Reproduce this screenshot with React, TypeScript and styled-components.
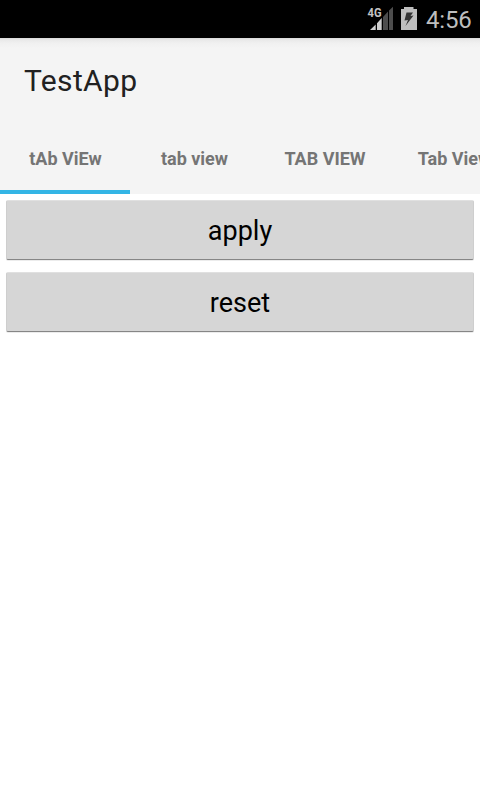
import React from 'react';
import styled, { createGlobalStyle } from 'styled-components';

const GlobalStyle = createGlobalStyle`
  * { box-sizing: border-box; }
  body { margin: 0; background: #fff; font-family: Roboto, sans-serif; overflow: hidden; }
`;

const Screen = styled.main`
  width: 480px;
  height: 800px;
  display: flex;
  flex-direction: column;
  overflow: hidden;
  background: #fff;
`;

const StatusBar = styled.header`
  height: 38px;
  flex: none;
  display: flex;
  align-items: center;
  justify-content: flex-end;
  padding-right: 8px;
  background: #000;
`;

const SignalIcon = styled.svg`
  flex: none;
  width: 28px;
  height: 38px;
  margin-right: 8px;
`;

const BatteryIcon = styled.svg`
  flex: none;
  width: 16px;
  height: 38px;
  margin-right: 9px;
`;

const Clock = styled.time`
  width: 46px;
  color: #bebebe;
  font-size: 24px;
  line-height: 38px;
  letter-spacing: -0.2px;
  padding-top: 1px;
`;

const AppBar = styled.div`
  height: 156px;
  flex: none;
  background: linear-gradient(#d9d9d9 0, #e9e9e9 2px, #f0f0f0 5px, #f4f4f4 10px);
`;

const Title = styled.h1`
  margin: 0;
  height: 84px;
  padding: 1px 0 0 24px;
  font-size: 30px;
  font-weight: 400;
  line-height: 84px;
  letter-spacing: 0.35px;
  color: #212121;
`;

const TabStrip = styled.nav`
  height: 72px;
  display: flex;
  overflow: hidden;
`;

const Tab = styled.button<{ $width: number }>`
  flex: none;
  width: ${p => p.$width}px;
  height: 72px;
  padding: 1px 0 0;
  border: 0;
  background: none;
  color: #757575;
  font: 700 18px/68px Roboto, sans-serif;
  white-space: nowrap;
`;

const Indicator = styled.div`
  width: 130px;
  height: 4px;
  margin-top: -4px;
  background: #33b5e5;
`;

const Actions = styled.section`
  display: flex;
  flex-direction: column;
  gap: 12px;
  padding: 6px;
`;

const ActionButton = styled.button`
  height: 60px;
  padding: 2px 0 0;
  border: 1px solid #cecece;
  border-top-color: #e0e0e0;
  border-bottom-color: #868686;
  border-radius: 2px;
  background: #d6d6d6;
  box-shadow: 0 1px 0 #ececec;
  color: #000;
  font: 400 27px/56px Roboto, sans-serif;
`;

const tabs = [
  { label: 'tAb ViEw', width: 131 },
  { label: 'tab view', width: 127 },
  { label: 'TAB VIEW', width: 134 },
  { label: 'Tab View', width: 125 },
];

export default function App() {
  return (
    <Screen>
      <GlobalStyle />
      <StatusBar>
        <SignalIcon viewBox="0 0 28 38" aria-label="4G signal">
          <path d="M5 30 10.7 24.5V30Z M12 23.2 16.7 18V30H12Z" fill="#cfcfcf" />
          <path d="M18 17 23 11.6V30H18Z M24 10.6 28.7 6V30H24Z" fill="#4d4d4d" />
          <text x="2.5" y="17" fontFamily="Roboto" fontSize="13" fontWeight="700" fill="#c4c4c4" textLength="14" lengthAdjust="spacingAndGlyphs">4G</text>
        </SignalIcon>
        <BatteryIcon viewBox="0 0 16 38" aria-label="Battery charging">
          <path d="M0 9H3V7H12.5V9H16V30H0Z" fill="#bebebe" />
          <path d="M5.5 12.5H12L9.5 16L12.5 15.5L4.5 26L7 20L3.5 20.5Z" fill="#333" />
        </BatteryIcon>
        <Clock>4:56</Clock>
      </StatusBar>
      <AppBar>
        <Title>TestApp</Title>
        <TabStrip>
          {tabs.map(tab => (
            <Tab key={tab.label} $width={tab.width}>{tab.label}</Tab>
          ))}
        </TabStrip>
        <Indicator />
      </AppBar>
      <Actions>
        <ActionButton>apply</ActionButton>
        <ActionButton>reset</ActionButton>
      </Actions>
    </Screen>
  );
}
